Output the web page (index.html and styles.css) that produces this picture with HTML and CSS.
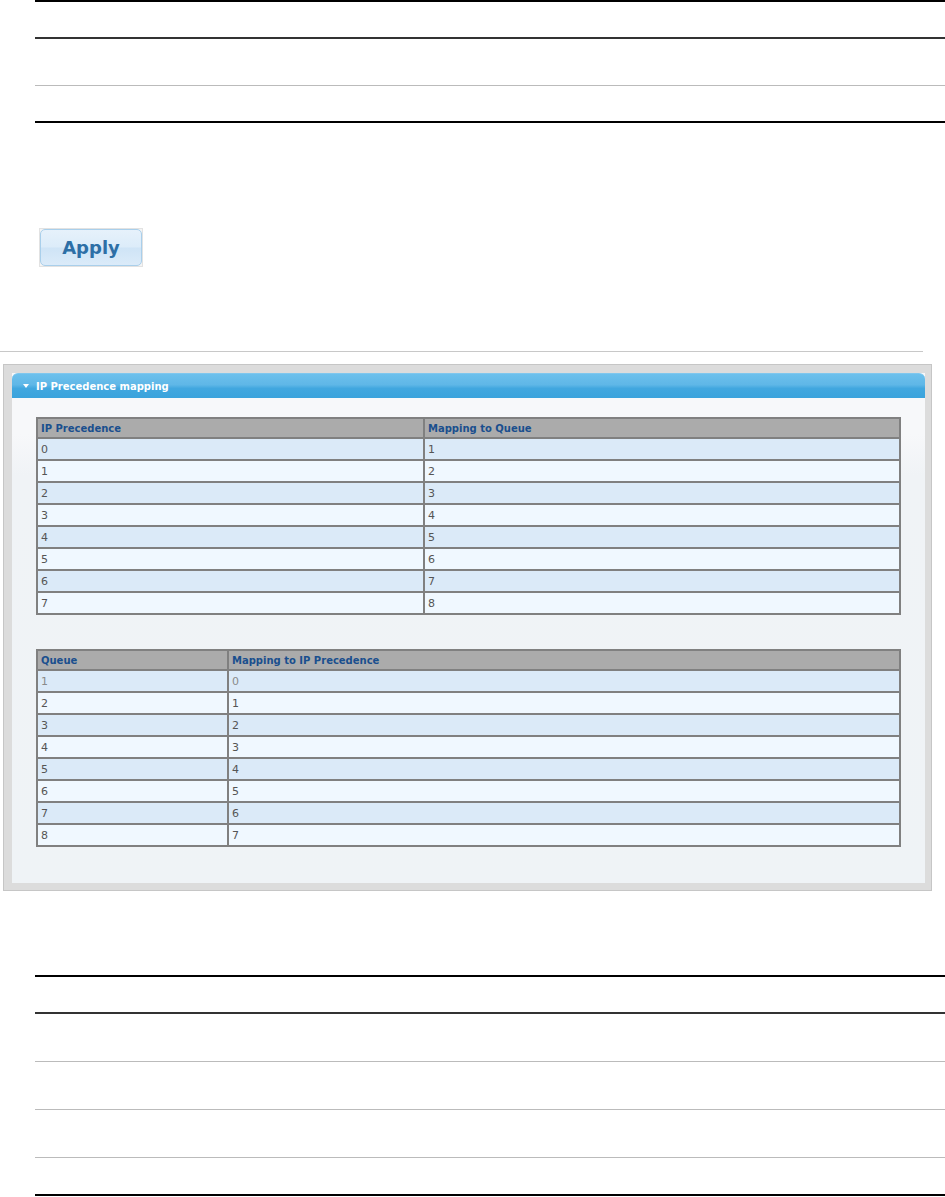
FILE: index.html
```html
<!DOCTYPE html>
<html lang="en">
<head>
  <meta charset="UTF-8">
  <title>IP Precedence mapping</title>
  <link rel="stylesheet" href="styles.css">
</head>
<body>

  <div class="rules rules-top">
    <div class="rule-row rule-head"></div>
    <div class="rule-row rule-mid"></div>
    <div class="rule-row rule-last"></div>
  </div>

  <div class="apply-wrap">
    <button class="apply-btn">Apply</button>
  </div>

  <div class="separator"></div>

  <div class="panel-frame">
    <div class="panel">
      <div class="panel-title">
        <span class="arrow"></span>IP Precedence mapping
      </div>
      <div class="panel-body">
        <table class="map-table map-precedence">
          <tr><th class="col-a">IP Precedence</th><th>Mapping to Queue</th></tr>
          <tr><td>0</td><td>1</td></tr>
          <tr><td>1</td><td>2</td></tr>
          <tr><td>2</td><td>3</td></tr>
          <tr><td>3</td><td>4</td></tr>
          <tr><td>4</td><td>5</td></tr>
          <tr><td>5</td><td>6</td></tr>
          <tr><td>6</td><td>7</td></tr>
          <tr><td>7</td><td>8</td></tr>
        </table>

        <table class="map-table map-queue">
          <tr><th class="col-a">Queue</th><th>Mapping to IP Precedence</th></tr>
          <tr><td class="dim">1</td><td class="dim">0</td></tr>
          <tr><td>2</td><td>1</td></tr>
          <tr><td>3</td><td>2</td></tr>
          <tr><td>4</td><td>3</td></tr>
          <tr><td>5</td><td>4</td></tr>
          <tr><td>6</td><td>5</td></tr>
          <tr><td>7</td><td>6</td></tr>
          <tr><td>8</td><td>7</td></tr>
        </table>
      </div>
    </div>
  </div>

  <div class="rules rules-bottom">
    <div class="rule-row rule-head"></div>
    <div class="rule-row rule-mid"></div>
    <div class="rule-row rule-mid"></div>
    <div class="rule-row rule-mid"></div>
    <div class="rule-row rule-last"></div>
  </div>

</body>
</html>
```

FILE: styles.css
```css
body {
  margin: 0;
  font-family: "DejaVu Sans", Verdana, sans-serif;
  background-color: #fff;
}

/* empty rule tables above and below the panel */
.rules {
  margin-left: 35px;
  border-top: 2px solid #000;
}

.rule-head {
  height: 35px;
  border-bottom: 2px solid #333;
}

.rules-top .rule-mid {
  height: 46px;
  border-bottom: 1px solid #bbb;
}

.rules-bottom .rule-mid {
  height: 47px;
  border-bottom: 1px solid #bbb;
}

.rule-last {
  height: 35px;
  border-bottom: 2px solid #000;
}

.rules-bottom .rule-last {
  height: 36px;
}

.rules-bottom {
  margin-top: 84px;
}

/* apply button */
.apply-wrap {
  margin: 105px 0 0 39px;
  width: 104px;
  height: 39px;
  box-sizing: border-box;
  border: 1px solid #e2e2e2;
  background-color: #f4f4f4;
}

.apply-btn {
  display: block;
  width: 102px;
  height: 37px;
  padding: 0;
  border: 1px solid #a9cfeb;
  border-radius: 5px;
  background: linear-gradient(#e6f1fb 0%, #dcecf9 48%, #cfe4f6 52%, #dbebf9 100%);
  color: #2d6fa6;
  font-family: "DejaVu Sans", Verdana, sans-serif;
  font-size: 18px;
  font-weight: bold;
  line-height: 34px;
  cursor: pointer;
}

.separator {
  margin-top: 84px;
  width: 923px;
  height: 1px;
  background-color: #c8c8c8;
}

/* panel */
.panel-frame {
  margin: 12px 0 0 3px;
  width: 929px;
  box-sizing: border-box;
  padding: 8px 6px 7px 8px;
  border: 1px solid #c6c6c6;
  background-color: #dcdcdc;
}

.panel {
  background: linear-gradient(#f7f8fa 0%, #f7f8fa 12%, #f0f3f6 20%, #eff3f6 100%);
}

.panel-title {
  height: 25px;
  border-radius: 6px 6px 0 0;
  background: linear-gradient(#6dc0ec 0%, #5fb7e7 45%, #41a7df 60%, #3aa3dc 100%);
  color: #fff;
  font-size: 10px;
  font-weight: bold;
  line-height: 25px;
  padding-left: 11px;
  border-top: 1px solid #7fc7ee;
  box-sizing: border-box;
}

.arrow {
  display: inline-block;
  width: 0;
  height: 0;
  border-left: 3px solid transparent;
  border-right: 3px solid transparent;
  border-top: 4px solid #fff;
  margin-right: 7px;
  vertical-align: 2px;
}

.panel-body {
  padding: 19px 24px 36px 24px;
}

.map-table {
  width: 865px;
  border-collapse: collapse;
  border: 2px solid #808080;
  font-size: 11px;
}

.map-queue {
  margin-top: 34px;
}

.map-table th,
.map-table td {
  height: 22px;
  padding: 0 0 0 3px;
  border: 2px solid #808080;
  text-align: left;
  box-sizing: border-box;
}

.map-table th {
  height: 20px;
  background-color: #ababab;
  color: #1a4f8e;
  font-size: 10px;
  font-weight: bold;
}

.map-table td {
  color: #555;
}

.map-table tr:nth-child(even) td {
  background-color: #dbeaf8;
}

.map-table tr:nth-child(odd) td {
  background-color: #f0f8ff;
}

.map-table td.dim {
  color: #8a8a8a;
}

.map-precedence .col-a {
  width: 387px;
}

.map-queue .col-a {
  width: 191px;
}
```
